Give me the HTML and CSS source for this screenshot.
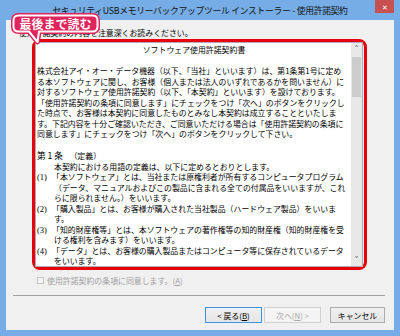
FILE: index.html
```html
<!doctype html>
<html>
	<head>
		<meta charset="utf-8">
		<title>使用許諾契約</title>
		<link rel="stylesheet" href="styles.css">
	</head>
	<body>
		<div class="window">
			<div class="titlebar">セキュリティUSBメモリーバックアップツール インストーラー - 使用許諾契約</div>
			<div class="close">&#x2715;</div>

			<div class="client">
				<div class="intro">使用許諾契約の内容を注意深くお読みください。</div>

				<div class="license">
					<div class="textbox">
						<div class="text">
							<div class="center">ソフトウェア使用許諾契約書</div>
							<div>&nbsp;</div>
							<div>株式会社アイ・オー・データ機器（以下、「当社」といいます）は、第1条第1号に定め</div>
							<div>る本ソフトウェアに関し、お客様（個人または法人のいずれであるかを問いません）に</div>
							<div>対するソフトウェア使用許諾契約（以下、「本契約」といいます）を設けております。</div>
							<div>「使用許諾契約の条項に同意します」にチェックをつけ「次へ」のボタンをクリックし</div>
							<div>た時点で、お客様は本契約に同意したものとみなし本契約は成立することといたしま</div>
							<div>す。下記内容を十分ご確認いただき、ご同意いただける場合は「使用許諾契約の条項に</div>
							<div>同意します」にチェックをつけ「次へ」のボタンをクリックして下さい。</div>
							<div>&nbsp;</div>
							<div class="article">第 1 条　<span class="head">（定義）</span></div>
							<div class="indent">本契約における用語の定義は、以下に定めるとおりとします。</div>
							<div class="item"><span class="num">(1)</span>「本ソフトウェア」とは、当社または原権利者が所有するコンピュータプログラム</div>
							<div class="indent">（データ、マニュアルおよびこの製品に含まれる全ての付属品をいいますが、これ</div>
							<div class="indent">らに限られません。）をいいます。</div>
							<div class="item"><span class="num">(2)</span>「購入製品」とは、お客様が購入された当社製品（ハードウェア製品）をいいま</div>
							<div class="indent">す。</div>
							<div class="item"><span class="num">(3)</span>「知的財産権等」とは、本ソフトウェアの著作権等の知的財産権（知的財産権を受</div>
							<div class="indent">ける権利を含みます）をいいます。</div>
							<div class="item"><span class="num">(4)</span>「データ」とは、お客様の購入製品またはコンピュータ等に保存されているデータ</div>
							<div class="indent">をいいます。</div>
						</div>
						<div class="scrollbar">
							<div class="arrow">&#x02C4;</div>
							<div class="thumb"></div>
							<div class="track"></div>
							<div class="arrow">&#x02C5;</div>
						</div>
					</div>
				</div>

				<div class="agree">
					<span class="checkbox"></span>
					<span>使用許諾契約の条項に同意します。(<u>A</u>)</span>
				</div>

				<div class="separator"></div>

				<div class="buttons">
					<div class="button default">&lt; 戻る(<u>B</u>)</div>
					<div class="button disabled">次へ(<u>N</u>) &gt;</div>
					<div class="button cancel">キャンセル</div>
				</div>
			</div>

			<!-- annotation balloon -->
			<div class="callout">
				<svg width="110" height="50" viewBox="0 0 110 50">
					<path class="callout-edge" d="M18.5,15.5 H92.5 Q97.5,15.5 97.5,20.5 V26.5 Q97.5,31.5 92.5,31.5 H39 L37.5,42 L29,31.5 H18.5 Q13.5,31.5 13.5,26.5 V20.5 Q13.5,15.5 18.5,15.5 Z"/>
					<path class="callout-line" d="M18.5,15.5 H92.5 Q97.5,15.5 97.5,20.5 V26.5 Q97.5,31.5 92.5,31.5 H39 L37.5,42 L29,31.5 H18.5 Q13.5,31.5 13.5,26.5 V20.5 Q13.5,15.5 18.5,15.5 Z"/>
				</svg>
				<div class="callout-text">最後まで読む</div>
			</div>
		</div>
	</body>
</html>
```

FILE: styles.css
```css
body {
	margin: 0;
	width: 400px;
	height: 336px;
	overflow: hidden;
	background-color: #76ade6;
	font-family: "Noto Sans CJK JP", sans-serif;
	color: #000;
}
.window {
	position: relative;
	display: flex;
	flex-direction: column;
	height: 336px;
}
.titlebar {
	height: 20px;
	display: flex;
	align-items: center;
	justify-content: center;
	font-size: 8.8px;
	letter-spacing: -0.3px;
	color: #111;
	white-space: nowrap;
}
.close {
	position: absolute;
	top: 0;
	right: 6px;
	width: 19px;
	height: 13px;
	background-color: #c75050;
	color: #fff;
	font-size: 7px;
	display: flex;
	align-items: center;
	justify-content: center;
}
.client {
	flex: 1;
	margin: 0 6px 6px 6px;
	background-color: #f0f0f0;
	display: flex;
	flex-direction: column;
}
.intro {
	height: 19px;
	padding-left: 13px;
	box-sizing: border-box;
	padding-top: 8px;
	font-size: 7.9px;
	line-height: 10px;
	white-space: nowrap;
}
.license {
	margin-left: 26px;
	width: 335px;
	height: 231px;
	box-sizing: border-box;
	border: 3px solid #e8000b;
	border-radius: 8px;
	padding: 0 1px 0 0;
	display: flex;
}
.textbox {
	flex: 1;
	display: flex;
	background-color: #fff;
	border: 1px solid #abadb3;
	overflow: hidden;
}
.text {
	flex: 1;
	padding: 2px 0 0 1px;
	font-size: 7.9px;
	line-height: 10.5px;
	white-space: nowrap;
	overflow: hidden;
}
.center {
	text-align: center;
}
.article {
	font-size: 8.6px;
}
.head {
	font-size: 7.9px;
	padding-left: 2px;
}
.indent {
	padding-left: 17px;
}
.num {
	display: inline-block;
	width: 15px;
	font-family: "Liberation Serif", serif;
	font-size: 8.5px;
}
.scrollbar {
	width: 11px;
	background-color: #e8e8e8;
	display: flex;
	flex-direction: column;
}
.arrow {
	height: 12px;
	font-size: 9px;
	line-height: 12px;
	text-align: center;
	color: #606060;
	font-family: "DejaVu Sans", sans-serif;
}
.thumb {
	margin: 2px 1px 0 1px;
	height: 40px;
	background-color: #cdcdcd;
}
.track {
	flex: 1;
}
.agree {
	margin-top: 5px;
	height: 11px;
	padding-left: 31px;
	display: flex;
	align-items: center;
	gap: 3px;
	font-size: 7.9px;
	color: #a0a0a0;
	white-space: nowrap;
}
.checkbox {
	width: 7px;
	height: 7px;
	border: 1px solid #c4c4c4;
	background-color: #f4f4f4;
	box-sizing: border-box;
}
.separator {
	margin: 9px 9px 0 7px;
	height: 1px;
	background-color: #a0a0a0;
}
.buttons {
	margin-top: 11px;
	padding-right: 9px;
	display: flex;
	justify-content: flex-end;
}
.button {
	width: 57px;
	height: 16px;
	box-sizing: border-box;
	border: 1px solid #acacac;
	background-image: linear-gradient(#f0f0f0, #e5e5e5);
	font-size: 7.9px;
	display: flex;
	align-items: center;
	justify-content: center;
	white-space: nowrap;
}
.button.default {
	border-color: #3c93e0;
	margin-right: 2px;
}
.button.disabled {
	border-color: #d0d0d0;
	background-image: none;
	background-color: #f4f4f4;
	color: #a8a8a8;
	margin-right: 9px;
}
.button.cancel {
	width: 55px;
}
.callout {
	position: absolute;
	left: 0;
	top: 0;
	width: 110px;
	height: 50px;
}
.callout svg {
	display: block;
}
.callout-edge {
	fill: #e0245c;
	stroke: #e0245c;
	stroke-width: 5;
	stroke-linejoin: round;
}
.callout-line {
	fill: none;
	stroke: #fff;
	stroke-width: 2;
	stroke-linejoin: round;
}
.callout-text {
	position: absolute;
	left: 13px;
	top: 15px;
	width: 85px;
	height: 17px;
	display: flex;
	align-items: center;
	justify-content: center;
	color: #fff;
	font-size: 12px;
	font-weight: bold;
	line-height: 1;
}
```
